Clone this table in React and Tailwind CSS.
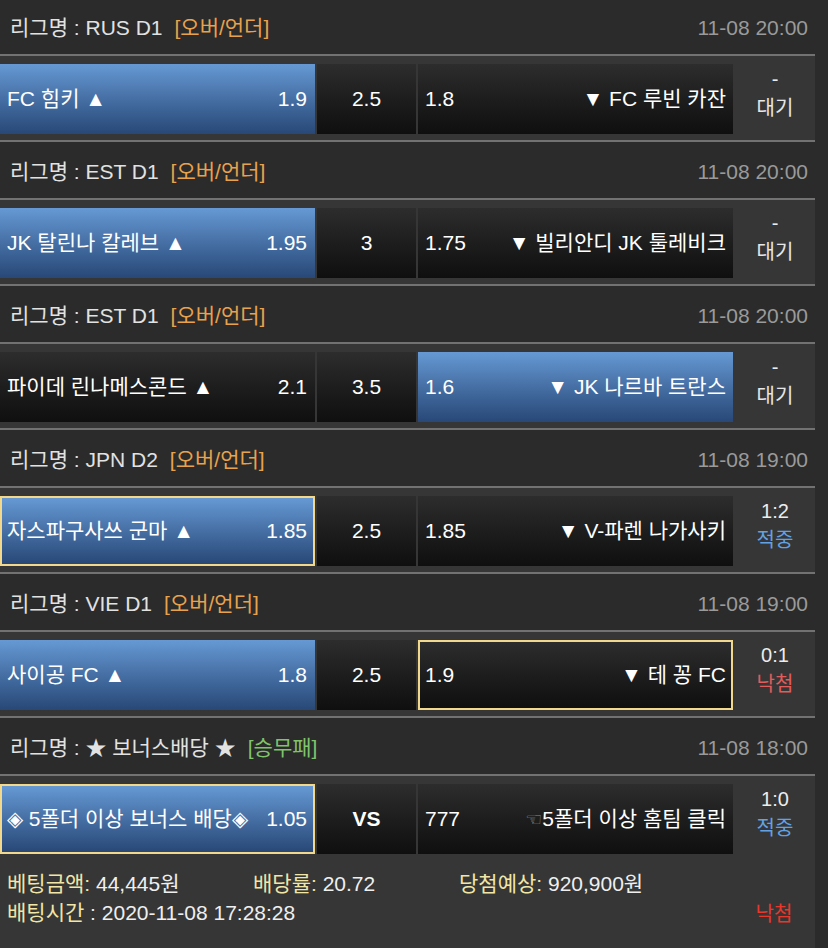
import React from "react";

const matches = [
  {
    league: "RUS D1",
    tag: "[오버/언더]",
    tagColor: "text-[#e9a24c]",
    date: "11-08 20:00",
    home: "FC 힘키 ▲",
    hOdd: "1.9",
    mid: "2.5",
    aOdd: "1.8",
    away: "▼ FC 루빈 카잔",
    pick: "home",
    border: false,
    s1: "-",
    s2: "대기",
    s2c: "text-[#e6e6e6]",
  },
  {
    league: "EST D1",
    tag: "[오버/언더]",
    tagColor: "text-[#e9a24c]",
    date: "11-08 20:00",
    home: "JK 탈린나 칼레브 ▲",
    hOdd: "1.95",
    mid: "3",
    aOdd: "1.75",
    away: "▼ 빌리안디 JK 툴레비크",
    pick: "home",
    border: false,
    s1: "-",
    s2: "대기",
    s2c: "text-[#e6e6e6]",
  },
  {
    league: "EST D1",
    tag: "[오버/언더]",
    tagColor: "text-[#e9a24c]",
    date: "11-08 20:00",
    home: "파이데 린나메스콘드 ▲",
    hOdd: "2.1",
    mid: "3.5",
    aOdd: "1.6",
    away: "▼ JK 나르바 트란스",
    pick: "away",
    border: false,
    s1: "-",
    s2: "대기",
    s2c: "text-[#e6e6e6]",
  },
  {
    league: "JPN D2",
    tag: "[오버/언더]",
    tagColor: "text-[#e9a24c]",
    date: "11-08 19:00",
    home: "자스파구사쓰 군마 ▲",
    hOdd: "1.85",
    mid: "2.5",
    aOdd: "1.85",
    away: "▼ V-파렌 나가사키",
    pick: "home",
    border: "home",
    s1: "1:2",
    s2: "적중",
    s2c: "text-[#62a2e2]",
  },
  {
    league: "VIE D1",
    tag: "[오버/언더]",
    tagColor: "text-[#e9a24c]",
    date: "11-08 19:00",
    home: "사이공 FC ▲",
    hOdd: "1.8",
    mid: "2.5",
    aOdd: "1.9",
    away: "▼ 테 꽁 FC",
    pick: "home",
    border: "away",
    s1: "0:1",
    s2: "낙첨",
    s2c: "text-[#e25c5c]",
  },
  {
    league: "★ 보너스배당 ★",
    tag: "[승무패]",
    tagColor: "text-[#7fc46c]",
    date: "11-08 18:00",
    home: "◈ 5폴더 이상 보너스 배당◈",
    hOdd: "1.05",
    mid: "VS",
    aOdd: "777",
    away: "5폴더 이상 홈팀 클릭",
    hand: true,
    pick: "home",
    border: "home",
    s1: "1:0",
    s2: "적중",
    s2c: "text-[#62a2e2]",
  },
];

const blue = "bg-gradient-to-b from-[#6699d4] to-[#284877]";
const dark = "bg-gradient-to-b from-[#2d2d2d] to-[#0f0f0f]";

function Block({ m, first, last }) {
  const homeBorder = m.border === "home";
  const awayBorder = m.border === "away";
  return (
    <div>
      <div
        className={
          "flex items-center justify-between bg-[#2b2b2b] pl-[10px] pr-[7px] " +
          (first ? "h-[54px] pt-[2px]" : "h-[56px] pt-[4px]")
        }
      >
        <div className="text-[21px] text-[#e2e2e2] whitespace-nowrap">
          {"리그명 : " + m.league}
          <span className={"ml-[12px] " + m.tagColor}>{m.tag}</span>
        </div>
        <div className="text-[21px] text-[#9a9a9a]">{m.date}</div>
      </div>
      <div className="h-[2px] bg-[#727272]" />
      <div className="flex h-[84px] bg-[#363636] pt-[8px] pb-[6px] gap-[2px]">
        <div
          className={
            "w-[315px] h-[70px] flex items-center justify-between text-[21px] text-white whitespace-nowrap " +
            (m.pick === "home" ? blue : dark) +
            (homeBorder ? " border-2 border-[#f2d88c] pl-[5px] pr-[6px]" : " pl-[7px] pr-[8px]")
          }
        >
          <span>{m.home}</span>
          <span>{m.hOdd}</span>
        </div>
        <div
          className={
            "w-[99px] h-[70px] flex items-center justify-center text-[21px] text-white " +
            dark +
            (m.mid === "VS" ? " font-bold" : "")
          }
        >
          {m.mid}
        </div>
        <div
          className={
            "w-[315px] h-[70px] flex items-center justify-between text-[21px] text-white whitespace-nowrap " +
            (m.pick === "away" ? blue : dark) +
            (awayBorder ? " border-2 border-[#f2d88c] pl-[5px] pr-[5px]" : " pl-[7px] pr-[7px]")
          }
        >
          <span>{m.aOdd}</span>
          <span className="flex items-center">
            {m.hand && (
              <span className="text-[19px] text-[#8e8e8e] font-['DejaVu_Sans',sans-serif]">
                ☜
              </span>
            )}
            <span>{m.away}</span>
          </span>
        </div>
        <div className="flex-1 flex flex-col items-center justify-center -mt-[8px] pb-[2px] text-[20px] leading-[29px]">
          <div className="text-[#ececec]">{m.s1}</div>
          <div className={m.s2c}>{m.s2}</div>
        </div>
      </div>
      {!last && <div className="h-[2px] bg-[#727272]" />}
    </div>
  );
}

export default function App() {
  return (
    <div className="min-h-screen w-full bg-[#2b2b2b] font-['Liberation_Sans','Noto_Sans_CJK_KR',sans-serif]">
      <div className="w-[815px]">
        {matches.map((m, i) => (
          <Block key={i} m={m} first={i === 0} last={i === matches.length - 1} />
        ))}
        <div className="bg-[#363636] pt-[9px] pb-[30px] text-[21px] leading-[29px] text-[#efefef]">
          <div className="flex pl-[7px] whitespace-nowrap">
            <div className="w-[246px]">
              <span className="text-[#f1e6a6]">베팅금액:</span> 44,445원
            </div>
            <div className="w-[206px]">
              <span className="text-[#f1e6a6]">배당률:</span> 20.72
            </div>
            <div>
              <span className="text-[#f1e6a6]">당첨예상:</span> 920,900원
            </div>
          </div>
          <div className="flex whitespace-nowrap">
            <div className="w-[733px] pl-[7px]">
              <span className="text-[#f1e6a6]">배팅시간</span> : 2020-11-08 17:28:28
            </div>
            <div className="flex-1 text-center text-[#e8382c] text-[20px] pt-[2px]">낙첨</div>
          </div>
        </div>
      </div>
    </div>
  );
}
